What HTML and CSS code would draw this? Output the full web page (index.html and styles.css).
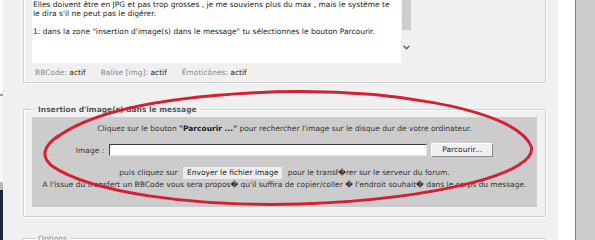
FILE: index.html
```html
<!DOCTYPE html>
<html lang="fr">
<head>
  <meta charset="UTF-8" />
  <title>Insertion d'image(s)</title>
  <link rel="stylesheet" href="styles.css">
</head>
<body>
  <div class="screen">
    <div class="edge-left"></div>

    <div class="main">
      <div class="post-box">
        <div class="editor">
          <div class="editor-text">
            <p>Elles doivent être en JPG et pas trop grosses , je me souviens plus du max , mais le système te<br>le dira s'il ne peut pas le digérer.</p>
            <p>1: dans la zone "insertion d'image(s) dans le message" tu sélectionnes le bouton Parcourir.</p>
          </div>
          <div class="scrollbar">
            <div class="thumb"></div>
            <svg class="chevron" width="7" height="5" viewBox="0 0 7 5">
              <polyline points="0.5,0.8 3.5,3.8 6.5,0.8" fill="none" stroke="#606060" stroke-width="1.3"/>
            </svg>
          </div>
        </div>
        <div class="status">
          <span class="flag">BBCode: <b>actif</b></span>
          <span class="flag">Balise [img]: <b>actif</b></span>
          <span class="flag">Émoticônes: <b>actif</b></span>
        </div>
      </div>

      <fieldset class="group upload">
        <legend>Insertion d'image(s) dans le message</legend>
        <div class="upload-panel">
          <div class="line">Cliquez sur le bouton <b>"Parcourir ..."</b> pour rechercher l'image sur le disque dur de votre ordinateur.</div>
          <div class="file-row">
            <span class="file-label">Image :</span>
            <span class="file-input"></span>
            <span class="btn-browse">Parcourir...</span>
          </div>
          <div class="line send-row">puis cliquez sur <span class="btn-send">Envoyer le fichier image</span> pour le transf�rer sur le serveur du forum.</div>
          <div class="line">A l'issue du transfert un BBCode vous sera propos� qu'il suffira de copier/coller � l'endroit souhait� dans le corps du message.</div>
        </div>
      </fieldset>

      <fieldset class="group options">
        <legend>Options</legend>
      </fieldset>
    </div>

    <div class="gutter"></div>
    <div class="side"></div>

    <svg class="circle" width="595" height="240" viewBox="0 0 595 240">
      <path d="M 56 138 C 90 112, 160 98, 250 93 C 380 86, 515 108, 531 146 C 540 172, 440 199, 300 204 C 190 207, 90 192, 52 166 C 40 156, 44 146, 58 136"
            fill="none" stroke="#d42030" stroke-width="3" stroke-linecap="round"/>
    </svg>
  </div>
</body>
</html>
```

FILE: styles.css
```css
body {
  margin: 0;
  background: #f0f0f0;
  font-family: "DejaVu Sans", Verdana, sans-serif;
  font-size: 7.5px;
  color: #333;
}

.screen {
  position: relative;
  display: flex;
  height: 240px;
  overflow: hidden;
}

.edge-left {
  width: 3px;
  background: linear-gradient(#fafafa 0 94px, #c98a7c 94px 96px, #f6f6f6 96px 182px, #b8b8b8 182px 190px, #1c2638 190px);
}

.main {
  flex: 1;
  background: #f0f0f0;
  padding: 0 12px 0 20px;
}

.gutter {
  width: 17px;
  background: #fff;
}

.side {
  width: 19px;
  background: #cbcbcb;
  border-left: 1px solid #7c7c7c;
}

/* message box */

.post-box {
  margin-top: -8px;
  border: 1px solid #d2d2d2;
  box-shadow: inset 1px 1px 0 #fff, 1px 1px 0 #fff;
  padding: 0 8px;
}

.editor {
  display: flex;
  width: 380px;
  height: 70px;
  background: #fff;
}

.editor-text {
  flex: 1;
  padding: 7px 4px 0 1px;
  line-height: 9px;
  color: #222;
}

.editor-text p {
  margin: 0 0 9px;
}

.scrollbar {
  width: 11px;
  background: #f0f0f0;
  position: relative;
}

.thumb {
  height: 37px;
  margin: 0 1px;
  background: #cdcdcd;
}

.chevron {
  display: block;
  margin: 15px auto 0;
}

.status {
  margin-top: 4.5px;
  padding: 0 3px 5.5px;
  line-height: 9px;
  color: #8a8a8a;
  display: flex;
  gap: 15px;
}

.status b {
  font-weight: normal;
  color: #222;
}

/* fieldsets */

.group {
  margin: 0;
  border: 1px solid #d2d2d2;
  box-shadow: inset 1px 1px 0 #fff, 1px 1px 0 #fff;
  padding: 3px 8px 9px;
}

.group legend {
  margin-left: 3px;
  padding: 0 3px;
  line-height: 9px;
}

.upload {
  margin-top: 22px;
}

.upload legend {
  font-weight: bold;
  color: #555;
}

.options {
  margin-top: 17px;
}

.options legend {
  color: #888;
}

/* upload panel */

.upload-panel {
  background: #cccccc;
  padding: 6px 4px 17px;
  text-align: center;
  line-height: 11px;
}

.upload-panel b {
  color: #222;
}

.file-row {
  display: flex;
  justify-content: center;
  align-items: center;
  margin-top: 9px;
  height: 14px;
}

.file-label {
  margin-right: 5px;
}

.file-input {
  width: 316px;
  height: 10px;
  background: #fff;
  border: 1px solid;
  border-color: #3c3c3c #e4e4e4 #e4e4e4 #3c3c3c;
}

.btn-browse {
  margin-left: 4px;
  width: 60px;
  height: 12px;
  line-height: 12px;
  background: #f0f0f0;
  border: 1px solid;
  border-color: #fff #8a8a8a #8a8a8a #fff;
  color: #222;
}

.send-row {
  margin-top: 10px;
  line-height: 12px;
}

.btn-send {
  display: inline-block;
  padding: 0 4px;
  margin: 0 3px;
  background: #ececec;
  color: #222;
}

.circle {
  position: absolute;
  left: 0;
  top: 0;
  pointer-events: none;
}
```
